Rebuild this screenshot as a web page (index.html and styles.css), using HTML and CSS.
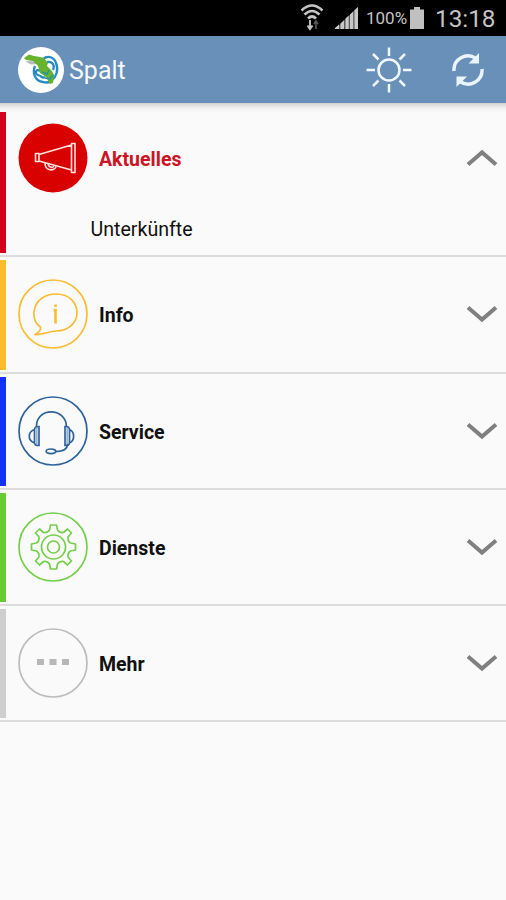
FILE: index.html
```html
<!DOCTYPE html>
<html lang="de">
<head>
<meta charset="utf-8">
<title>Spalt</title>
<link rel="stylesheet" href="styles.css">
</head>
<body>
<div class="status">
  <svg class="wifi" width="26" height="32" viewBox="0 0 26 32" fill="none" stroke="#c4c4c4" stroke-width="2.6">
    <path d="M2.500 8.500Q13-1.500 23.500 8.500M5.500 12.500Q13 5.500 20.500 12.500M9 16.500Q13 12.500 17 16.500"/>
    <path d="M11 18v8M8.500 23.500l2.500 3.500 2.500-3.500" stroke-width="1.900"/>
    <path d="M17 27v-7M15 22l2-3 2 3" stroke="#555" stroke-width="1.700"/>
  </svg>
  <svg class="signal" width="24" height="24" viewBox="0 0 24 24">
    <path d="M0 23L23 1v22z" fill="#5c5c5c"/>
    <path d="M0 23v-1l4-3.500V23zM5.500 23v-5.500l3.500-3.300V23zM10.500 23V12.500l3.200-3V23zM15 23V8.500l3.200-3V23zM19.500 23V4.300L23 1v22z" fill="#c8c8c8"/>
  </svg>
  <span class="percent">100%</span>
  <svg class="battery" width="14" height="22" viewBox="0 0 14 22" fill="#c0c0c0"><path d="M4 0h6v2.500h4V22H0V2.500h4z"/></svg>
  <span class="clock">13:18</span>
</div>
<header class="bar">
  <svg class="logo" width="46" height="46" viewBox="0 0 46 46">
    <circle cx="23" cy="23" r="23" fill="#fff"/>
    <g fill="none" stroke="#238bc0" stroke-width="2.300">
      <path d="M25 12C30 8 36 10 38 16c3 7 0 14-4 17M17 19c-3 7 0 15 8 16 4 1 7 1 9-2"/>
      <path d="M22 24c-4-3-6 3-2 4s4 4 7 2M29 15c6-1 8 4 6 8"/>
    </g>
    <path d="M7 14.500l6 3 6-.5v-2l-6-1z" fill="#b8bcc0"/>
    <path d="M6 11l5-3.500 5 1.500 6 1 4 1 4 5-1 3 5 5 2 4-1 8-3 1-4-7-6-4-2-7-5-5-7-1z" fill="#67b32e"/>
    <path d="M24 25l5 2 2-4M27 31l5 1 3-4" fill="none" stroke="#2892a0" stroke-width="1.500"/>
  </svg>
  <h1 class="title">Spalt</h1>
  <svg class="sun" width="46" height="46" viewBox="-23 -23 46 46" fill="none" stroke="#f0f7fd" stroke-width="2.500">
    <circle r="10.500"/>
    <path d="M0-22.500v8.500M0 22.500V14M-22.500 0h8.500M22.500 0H14M-16-16l5.500 5.500M16 16l-5.500-5.500M16-16l-5.500 5.500M-16 16l5.500-5.500"/>
  </svg>
  <svg class="sync" width="34" height="36" viewBox="-17 -18 34 36">
    <path d="M-14 1A14 14 0 0 1 8-11.500M14-1A14 14 0 0 1-8 11.500" fill="none" stroke="#eaf4fc" stroke-width="3.400"/>
    <path d="M11-17v10.500H.5zM-11.500 17V6.500H-1z" fill="#eaf4fc"/>
  </svg>
</header>
<main class="list">
  <section class="row open red">
    <div class="stripe"></div>
    <div class="content">
      <div class="head">
        <svg class="icon" width="70" height="70" viewBox="-35 -35 70 70">
          <circle r="34.500" fill="#d90000"/>
          <g fill="none" stroke="#ffe3e3" stroke-width="1.600" stroke-linejoin="round">
            <path d="M-14-3.500L18.500-13V12L-14 3zM18.500-14.500h3.500v29h-3.500zM-17.500-4.500h3.500v8h-3.500z"/>
            <path d="M-8 5c0 9 10 8 11 3.500M-5 6c1 4 5 4 6 2"/>
          </g>
        </svg>
        <span class="label">Aktuelles</span>
        <svg class="chevron" width="32" height="18" viewBox="0 0 32 18"><path d="M2 15.500L16 3.500l14 12"/></svg>
      </div>
      <div class="sub">Unterkünfte</div>
    </div>
  </section>
  <section class="row first yellow">
    <div class="stripe"></div>
    <div class="content">
      <div class="head">
        <svg class="icon" width="70" height="70" viewBox="-35 -35 70 70" fill="none" stroke="#fabd32" stroke-width="1.700">
          <circle r="34"/>
          <path d="M-12.500 13C-25 5-20-20 3-20c28 0 28 37 0 37-7 0-13 4-21 3.500 4-2 6-5 5.500-7.500z" stroke-linejoin="round"/>
          <path d="M2.500-9.500v2.500M.5-4h2V9.500" stroke-width="2.600"/>
        </svg>
        <span class="label">Info</span>
        <svg class="chevron" width="32" height="18" viewBox="0 0 32 18"><path d="M2 2.500l14 12 14-12"/></svg>
      </div>
    </div>
  </section>
  <section class="row blue">
    <div class="stripe"></div>
    <div class="content">
      <div class="head">
        <svg class="icon" width="70" height="70" viewBox="-35 -35 70 70" fill="none" stroke="#2e639b" stroke-width="1.700">
          <circle r="34"/>
          <path d="M-16.500-4.500C-17-24 13-24 13.500-4.500M14.500 13c0 5-4 7.500-12 7.500"/>
          <path d="M-14-4.500c-4 0-4 1-4.500 3-7 2.500-7 11 0 13.500 .5 2 1 2.500 4.500 2.500zM-18.500-1.500v13M12-4.500c4 0 4 1 4.500 3 5.500 2.500 5.500 11 0 13.500-.5 2-1 2.500-4.500 2.500zM16.500-1.500v13"/>
          <path d="M-16.200-3v16M14.200-3v16" stroke="#9bb2d0"/>
          <ellipse cx="-2" cy="20.300" rx="4.800" ry="2.300"/>
        </svg>
        <span class="label">Service</span>
        <svg class="chevron" width="32" height="18" viewBox="0 0 32 18"><path d="M2 2.500l14 12 14-12"/></svg>
      </div>
    </div>
  </section>
  <section class="row green">
    <div class="stripe"></div>
    <div class="content">
      <div class="head">
        <svg class="icon" width="70" height="70" viewBox="-35 -35 70 70" fill="none" stroke="#75cf4b" stroke-width="1.700">
          <circle r="34"/>
          <g transform="translate(.5 0)">
            <circle r="12"/><circle r="6"/>
            <path stroke-linejoin="round" d="M-3-22H3L4-17Q6-14 10-14.500L14-18 18-14 14.500-10Q14-6 17-4L22-3V3L17 4Q14 6 14.500 10L18 14 14 18 10 14.500Q6 14 4 17L3 22H-3L-4 17Q-6 14-10 14.500L-14 18-18 14-14.500 10Q-14 6-17 4L-22 3V-3L-17-4Q-14-6-14.500-10L-18-14-14-18-10-14.500Q-6-14-4-17Z"/>
          </g>
        </svg>
        <span class="label">Dienste</span>
        <svg class="chevron" width="32" height="18" viewBox="0 0 32 18"><path d="M2 2.500l14 12 14-12"/></svg>
      </div>
    </div>
  </section>
  <section class="row gray">
    <div class="stripe"></div>
    <div class="content">
      <div class="head">
        <svg class="icon" width="70" height="70" viewBox="-35 -35 70 70">
          <circle r="34" fill="none" stroke="#bcbcbc" stroke-width="1.700"/>
          <path d="M-16-4h7v6h-7zM-3.500-4h7v6h-7zM9-4h7v6H9z" fill="#b8b8b8"/>
        </svg>
        <span class="label">Mehr</span>
        <svg class="chevron" width="32" height="18" viewBox="0 0 32 18"><path d="M2 2.500l14 12 14-12"/></svg>
      </div>
    </div>
  </section>
</main>
</body>
</html>
```

FILE: styles.css
```css
* { box-sizing: border-box; }
body {
  margin: 0;
  height: 900px;
  background: #fafafa;
  font-family: Roboto, sans-serif;
  color: #111;
}
svg { display: block; flex: none; }
.status {
  height: 36px;
  background: #000;
  color: #c4c4c4;
  display: flex;
  align-items: center;
  justify-content: flex-end;
  padding-right: 10px;
}
.signal { margin: 0 7px 0 10px; }
.percent { font-size: 17px; width: 41px; margin-right: 3px; white-space: nowrap; }
.clock { font-size: 24.3px; width: 61px; margin-left: 11px; white-space: nowrap; padding-top: 1px; }
.bar {
  height: 67px;
  background: #6990b8;
  display: flex;
  align-items: center;
  padding: 0 21px 0 18px;
}
.title {
  margin: 2px auto 0 5px;
  font-size: 25px;
  font-weight: 400;
  color: #f4f8fc;
}
.sync { margin-left: 39px; }
.list { background: linear-gradient(#d0d0d0, #f0f0f0 5px, #fafafa 10px) no-repeat; }
.row {
  height: 116px;
  display: flex;
  padding: 3px 0 2px;
  border-bottom: 2px solid #dcdcdc;
}
.first { height: 117px; }
.open { height: 154px; padding-top: 9px; }
.stripe { width: 6px; background: var(--tone); }
.red { --tone: #d5001c; }
.yellow { --tone: #fbbb2c; }
.blue { --tone: #1232fa; }
.green { --tone: #67ca32; }
.gray { --tone: #cecece; }
.content { flex: 1; }
.head {
  height: 108px;
  display: flex;
  align-items: center;
  padding: 0 8px 0 11.5px;
}
.open .head { height: 92px; }
.label { margin: 2px auto 0 11.5px; font-size: 19.5px; font-weight: 700; }
.red .label { color: #cc1424; }
.chevron { fill: none; stroke: #808080; stroke-width: 4; }
.sub { padding-left: 84.5px; font-size: 19.6px; line-height: 24px; margin-top: 14px; }
```
